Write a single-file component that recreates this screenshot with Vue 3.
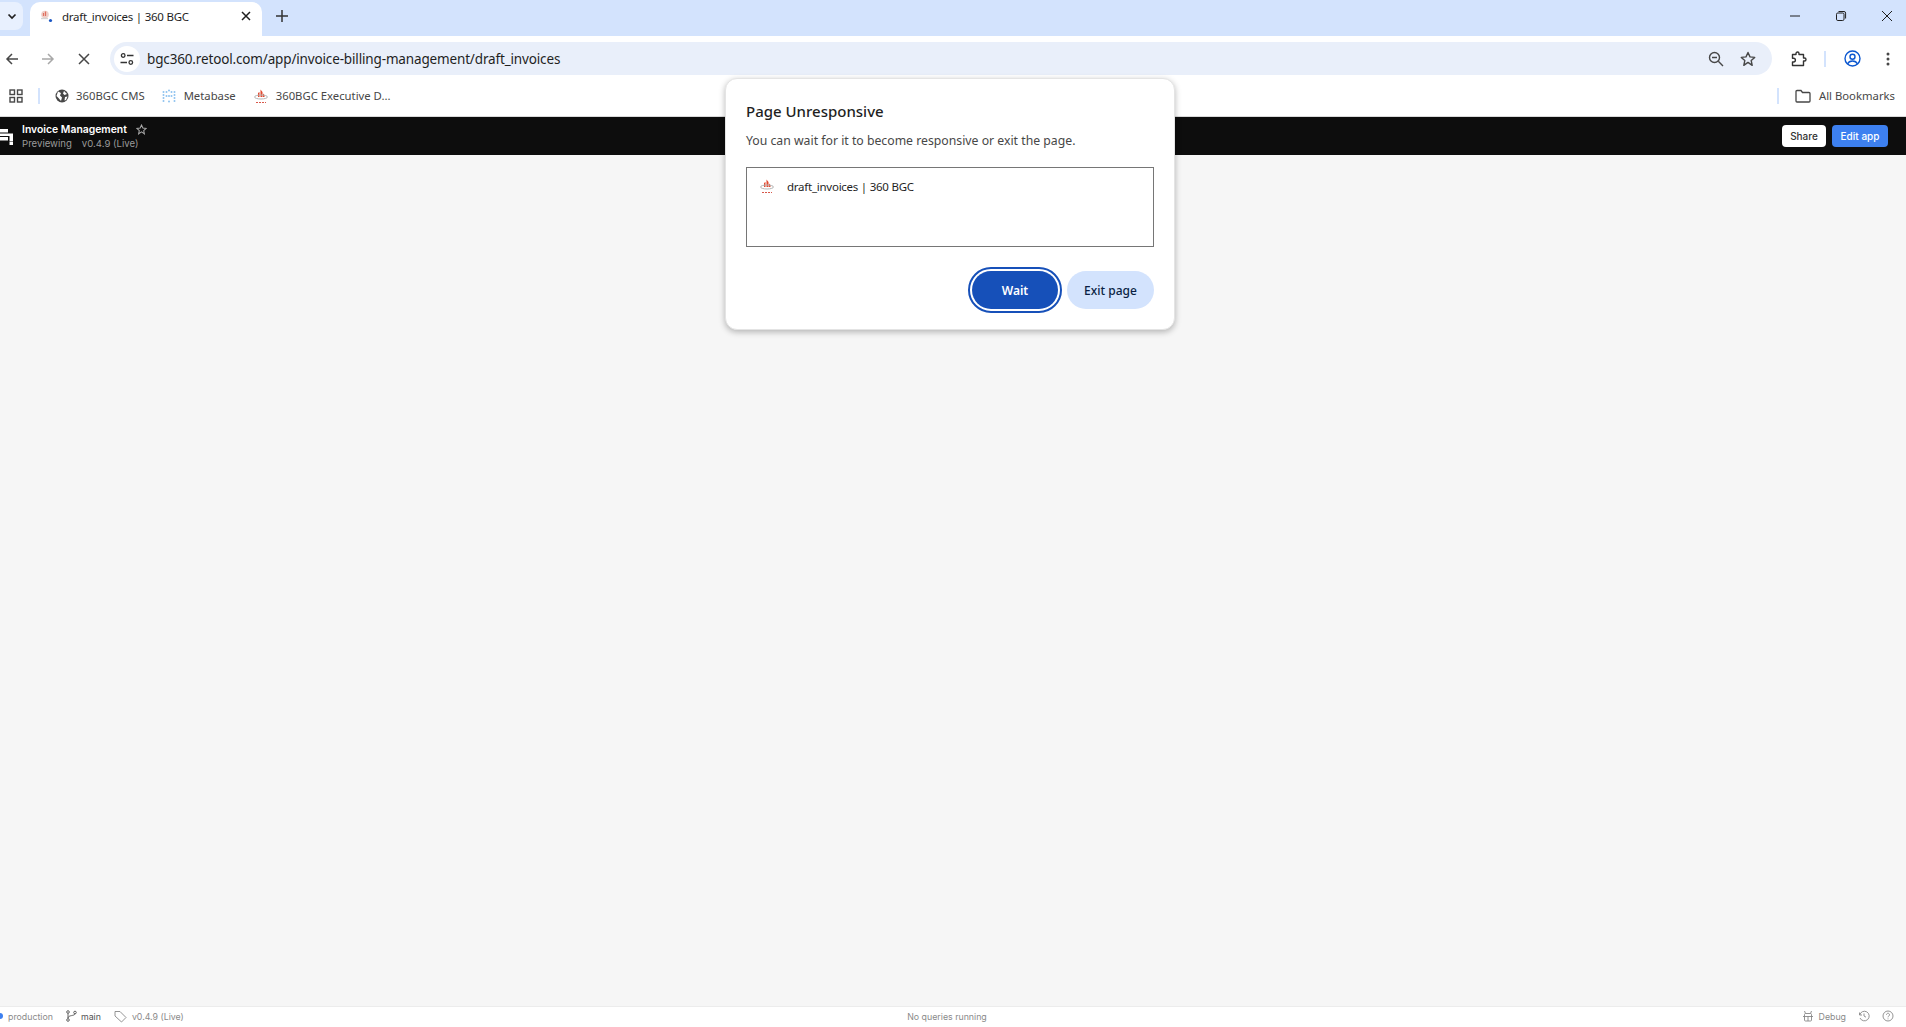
<script setup>
const bookmarks = [
  { label: '360BGC CMS', icon: 'globe' },
  { label: 'Metabase', icon: 'meta' },
  { label: '360BGC Executive D...', icon: 'logo' },
]
const metaDots = [
  [1.5, 3], [1.5, 6], [1.5, 9], [1.5, 12], [4.5, 3], [4.5, 7], [7, 1.5], [7, 7], [7, 12.5],
  [9.5, 3], [9.5, 7], [12.5, 3], [12.5, 6], [12.5, 9], [12.5, 12],
]
</script>

<template>
  <div class="page">
    <!-- tab strip -->
    <div class="tabstrip">
      <div class="tab-search">
        <svg width="12" height="12" viewBox="0 0 12 12"><path d="M2.500 4.500 6 8l3.500-3.500" fill="none" stroke="#1f1f1f" stroke-width="1.700" /></svg>
      </div>
      <div class="tab">
        <svg class="tab-fav" width="16" height="16" viewBox="0 0 16 16">
          <circle cx="6" cy="6.500" r="3.800" fill="#efcfc8" />
          <path d="M4.500 8V5M6.500 8V3.500" stroke="#e0705f" stroke-width="1.200" />
          <path d="M2 10.500h7" stroke="#d5d5d5" stroke-width="1.400" />
          <circle cx="11.500" cy="12.500" r="1.600" fill="#1a56c4" />
        </svg>
        <span class="tab-title">draft_invoices | 360 BGC</span>
        <svg class="tab-close" width="12" height="12" viewBox="0 0 12 12"><path d="M2 2l8 8M10 2l-8 8" stroke="#1f1f1f" stroke-width="1.500" /></svg>
      </div>
      <svg class="tab-plus" width="14" height="14" viewBox="0 0 14 14"><path d="M7 1v12M1 7h12" stroke="#333" stroke-width="1.500" /></svg>
      <div class="win-controls">
        <svg width="12" height="12" viewBox="0 0 12 12"><path d="M1 6h10" stroke="#1f1f1f" stroke-width="1" /></svg>
        <svg width="12" height="12" viewBox="0 0 12 12" fill="none" stroke="#1f1f1f"><rect x="1.500" y="3" width="7.500" height="7.500" rx="1.300" /><path d="M3.500 1.500h5.500a1.600 1.600 0 0 1 1.600 1.600V8.500" /></svg>
        <svg width="12" height="12" viewBox="0 0 12 12"><path d="M1 1l10 10M11 1 1 11" stroke="#1f1f1f" /></svg>
      </div>
    </div>

    <!-- toolbar -->
    <div class="toolbar">
      <div class="nav">
        <svg width="14" height="14" viewBox="0 0 14 14" fill="none" stroke="#474747" stroke-width="1.500"><path d="M13 7H2M7 2 2 7l5 5" /></svg>
        <svg width="14" height="14" viewBox="0 0 14 14" fill="none" stroke="#a8a8a8" stroke-width="1.500"><path d="M1 7h11M7 2l5 5-5 5" /></svg>
        <svg class="stop" width="12" height="12" viewBox="0 0 12 12"><path d="M1 1l10 10M11 1 1 11" stroke="#474747" stroke-width="1.500" /></svg>
      </div>
      <div class="omnibox">
        <div class="site-chip">
          <svg width="14" height="14" viewBox="0 0 14 14" fill="none" stroke="#333" stroke-width="1.300">
            <circle cx="3.200" cy="3.500" r="1.800" /><path d="M7 3.500h6.500M.5 10.500H7" /><circle cx="10.800" cy="10.500" r="1.800" />
          </svg>
        </div>
        <span class="url">bgc360.retool.com/app/invoice-billing-management/draft_invoices</span>
        <svg class="zoom-out" width="16" height="16" viewBox="0 0 16 16" fill="none" stroke="#474747" stroke-width="1.400">
          <circle cx="6.500" cy="6.500" r="5" /><path d="M10.300 10.300 15 15M4 6.500h5" />
        </svg>
        <svg class="star" width="16" height="16" viewBox="0 0 16 16" fill="none" stroke="#474747" stroke-width="1.400"><path d="m8 1.500 2 4.400 4.700.5-3.500 3.200 1 4.700L8 11.400l-4.200 2.900 1-4.700L1.300 6.400 6 5.900z" stroke-linejoin="round" /></svg>
      </div>
      <div class="tool-icons">
        <svg width="16" height="16" viewBox="0 0 16 16" fill="none" stroke="#333" stroke-width="1.400"><path d="M1.500 3.500H5V2.500a1.500 1.500 0 0 1 3 0v1h4.500V7h1a1.500 1.500 0 0 1 0 3h-1v4.500H1.500V11h1a1.700 1.700 0 0 0 0-3.800h-1z" stroke-linejoin="round" /></svg>
        <span class="tool-sep"></span>
        <svg width="17" height="17" viewBox="0 0 17 17" fill="none" stroke="#0b57d0" stroke-width="1.400"><circle cx="8.500" cy="8.500" r="7.500" /><circle cx="8.500" cy="6.800" r="2.500" /><path d="M3.500 14c1-2.200 3-3 5-3s4 .8 5 3" /></svg>
        <svg class="kebab" width="4" height="14" viewBox="0 0 4 14" fill="#474747"><circle cx="2" cy="2" r="1.500" /><circle cx="2" cy="7" r="1.500" /><circle cx="2" cy="12" r="1.500" /></svg>
      </div>
    </div>

    <!-- bookmarks -->
    <div class="bookmarks">
      <svg class="apps" width="14" height="14" viewBox="0 0 14 14" fill="none" stroke="#474747" stroke-width="1.400">
        <rect x="1" y="1" width="4.500" height="4.500" /><rect x="8.500" y="1" width="4.500" height="4.500" /><rect x="1" y="8.500" width="4.500" height="4.500" /><rect x="8.500" y="8.500" width="4.500" height="4.500" />
      </svg>
      <span class="bm-sep"></span>
      <div v-for="b in bookmarks" :key="b.label" class="bm">
        <svg v-if="b.icon === 'globe'" width="14" height="14" viewBox="0 0 14 14"><circle cx="7" cy="7" r="6.500" fill="#474747" /><path d="M3 2.500 6 4 5 6.500 7 8.500 6 12 3.500 9 1.500 7zM9 2l3 3-2.500 1L8 4.500zM10 8l2.500-.5L11 11l-1.500.5z" fill="#fff" /></svg>
        <svg v-else-if="b.icon === 'meta'" class="meta-icon" width="14" height="14" viewBox="0 0 14 14" fill="#8fc3ef">
          <circle v-for="(d, i) in metaDots" :key="i" :cx="d[0]" :cy="d[1]" r="1" />
        </svg>
        <svg v-else width="16" height="16" viewBox="0 0 16 16">
          <path d="M5 9V5l1.500-1V9zM7.500 9V1.500L9.500 4V9zM10 9V5.500L11.500 7V9z" fill="#e2492f" />
          <ellipse cx="8" cy="9" rx="6.500" ry="2" fill="none" stroke="#b5b5b5" stroke-width="1" />
          <path d="M3 14.500h10" stroke="#d8584a" stroke-width="1.200" stroke-dasharray="2 1" />
        </svg>
        <span>{{ b.label }}</span>
      </div>
      <span class="bm-sep right"></span>
      <div class="bm all">
        <svg width="16" height="14" viewBox="0 0 16 14" fill="none" stroke="#474747" stroke-width="1.300"><path d="M1 2.500A1 1 0 0 1 2 1.500h4l1.500 2H14a1 1 0 0 1 1 1V12a1 1 0 0 1-1 1H2a1 1 0 0 1-1-1z" /></svg>
        <span>All Bookmarks</span>
      </div>
    </div>

    <!-- retool header -->
    <header class="appbar">
      <svg class="retool-logo" width="13" height="16" viewBox="0 0 13 16" fill="#fff">
        <path d="M0 0h8v3.500H0zM0 4.500h13v3.500H9.500V7H0zM0 8h8v3.500H0zM9.500 8H13v4H9.500zM9.500 12.500H13V16H9.500z" />
      </svg>
      <div class="app-meta">
        <div class="app-name">Invoice Management
          <svg width="11" height="11" viewBox="0 0 16 16" fill="none" stroke="#a8a8a8" stroke-width="1.500"><path d="m8 1.500 2 4.400 4.700.5-3.500 3.200 1 4.700L8 11.400l-4.200 2.900 1-4.700L1.300 6.400 6 5.900z" /></svg>
        </div>
        <div class="app-sub"><span>Previewing</span><span>v0.4.9 (Live)</span></div>
      </div>
      <button class="btn-share">Share</button>
      <button class="btn-edit">Edit app</button>
    </header>

    <main class="canvas"></main>

    <footer class="statusbar">
      <div class="status-left">
        <span class="env"><i class="env-dot"></i>production</span>
        <span class="branch">
          <svg width="11" height="12" viewBox="0 0 11 12" fill="none" stroke="#555" stroke-width="0.900"><circle cx="2" cy="2" r="1.300" /><circle cx="2" cy="10" r="1.300" /><circle cx="9" cy="2.500" r="1.300" /><path d="M2 3.300v5.400M9 3.800C9 6 2 5 2 8" /></svg>
          main
        </span>
        <span class="version">
          <svg width="13" height="13" viewBox="0 0 13 13" fill="none" stroke="#888" stroke-width="0.900"><path d="M1 1.500h5l6 6-4.500 4.500-6.500-6z" /></svg>
          v0.4.9 (Live)
        </span>
      </div>
      <span class="status-mid">No queries running</span>
      <div class="status-right">
        <span class="debug">
          <svg width="12" height="12" viewBox="0 0 12 12" fill="none" stroke="#888" stroke-width="0.900"><rect x="2.500" y="3.500" width="7" height="7.500" rx="1" /><path d="M1 6.500h10M6 6.500V11M3.500 3.500 2.500 1M8.500 3.500 9.500 1" /></svg>
          Debug
        </span>
        <svg width="12" height="12" viewBox="0 0 12 12" fill="none" stroke="#888" stroke-width="0.900"><path d="M1.500 2.500v2.500H4M1.700 5A4.800 4.800 0 1 1 2 8M6 3.500V6l2 1.200" /></svg>
        <svg width="12" height="12" viewBox="0 0 12 12" fill="none" stroke="#888" stroke-width="0.900"><circle cx="6" cy="6" r="5" /><path d="M4.500 4.700a1.500 1.500 0 1 1 2.300 1.300c-.6.400-.8.700-.8 1.300M6 8.500v.8" /></svg>
      </div>
    </footer>

    <!-- chrome dialog over the page -->
    <div class="dialog">
      <h2>Page Unresponsive</h2>
      <p>You can wait for it to become responsive or exit the page.</p>
      <div class="tab-list">
        <svg width="16" height="16" viewBox="0 0 16 16">
          <path d="M5 9V5l1.500-1V9zM7.500 9V1.500L9.500 4V9zM10 9V5.500L11.500 7V9z" fill="#e2492f" />
          <ellipse cx="8" cy="9" rx="6.500" ry="2" fill="none" stroke="#b5b5b5" stroke-width="1" />
          <path d="M3 14.500h10" stroke="#d8584a" stroke-width="1.200" stroke-dasharray="2 1" />
        </svg>
        <span>draft_invoices | 360 BGC</span>
      </div>
      <div class="dialog-actions">
        <button class="btn-wait">Wait</button>
        <button class="btn-exit">Exit page</button>
      </div>
    </div>
  </div>
</template>

<style scoped>
.page {
  position: relative;
  height: 100vh;
  display: flex;
  flex-direction: column;
  overflow: hidden;
  font-family: "Noto Sans", "Open Sans", sans-serif;
  color: #1f1f1f;
  background: #f6f6f6;
}

.tabstrip {
  height: 36px;
  flex: none;
  background: #d3e3fd;
  display: flex;
  align-items: flex-start;
}
.tab-search {
  width: 23px;
  height: 28px;
  margin-top: 2px;
  background: #e8f0fe;
  border-radius: 0 8px 8px 0;
  display: flex;
  align-items: center;
  justify-content: center;
}
.tab {
  width: 232px;
  height: 34px;
  margin: 2px 0 0 7px;
  padding: 0 10px 6px 9px;
  box-sizing: border-box;
  background: #fff;
  border-radius: 10px 10px 0 0;
  display: flex;
  align-items: center;
  gap: 7px;
  font-size: 11.500px;
}
.tab-fav {
  flex: none;
}
.tab-title {
  flex: 1;
  letter-spacing: -0.25px;
  white-space: nowrap;
}
.tab-plus {
  margin: 9px 0 0 13px;
}
.win-controls {
  margin-left: auto;
  margin-top: 10px;
  padding-right: 13px;
  display: flex;
  gap: 34px;
}

.toolbar {
  height: 42px;
  flex: none;
  box-sizing: border-box;
  padding-top: 3px;
  background: #fff;
  display: flex;
  align-items: center;
}
.nav {
  width: 110px;
  flex: none;
  padding-left: 5px;
  box-sizing: border-box;
  display: flex;
  align-items: center;
  gap: 22px;
}
.stop {
  margin-left: 1px;
}
.omnibox {
  width: 1662px;
  height: 33px;
  flex: none;
  box-sizing: border-box;
  padding: 0 16px 0 4px;
  background: #e9effa;
  border-radius: 17px;
  display: flex;
  align-items: center;
}
.site-chip {
  width: 26px;
  height: 26px;
  border-radius: 50%;
  background: #fff;
  display: flex;
  align-items: center;
  justify-content: center;
}
.url {
  margin-left: 7px;
  font-size: 13.500px;
  letter-spacing: -0.15px;
  color: #1f1f1f;
  white-space: nowrap;
}
.zoom-out {
  margin-left: auto;
  transform: translateX(1px);
}
.star {
  margin-left: 17px;
}
.tool-icons {
  flex: 1;
  display: flex;
  align-items: center;
  padding-left: 19px;
}
.tool-sep {
  width: 2px;
  height: 16px;
  margin: 0 18px 0 17px;
  background: #d3e3fd;
}
.kebab {
  margin-left: 25px;
}

.bookmarks {
  height: 39px;
  flex: none;
  box-sizing: border-box;
  padding: 0 0 3px 9px;
  background: #fff;
  border-bottom: 1px solid #d9d9d9;
  display: flex;
  align-items: center;
  font-size: 11.300px;
  color: #474747;
}
.bm-sep {
  width: 2px;
  height: 16px;
  margin: 0 15px 0 15px;
  background: #d3e3fd;
}
.bm-sep.right {
  margin: 0 16px 0 auto;
}
.bm {
  display: flex;
  align-items: center;
  gap: 7px;
  margin-right: 17px;
  white-space: nowrap;
}
.meta-icon {
  margin-right: 1px;
}
.bm.all {
  margin-right: 11px;
  gap: 8px;
}

.appbar {
  height: 38px;
  flex: none;
  background: #0d0d0d;
  display: flex;
  align-items: center;
  font-family: Inter, "Liberation Sans", sans-serif;
  padding-right: 18px;
}
.retool-logo {
  margin: 2px 9px 0 0;
  flex: none;
}
.app-meta {
  flex: 1;
  padding-top: 1px;
}
.app-name {
  display: flex;
  align-items: center;
  gap: 9px;
  color: #fff;
  font-size: 10.400px;
  font-weight: 600;
  line-height: 14px;
}
.app-sub {
  display: flex;
  gap: 10px;
  color: #9a9a9a;
  font-size: 9.600px;
  line-height: 14px;
}
.btn-share,
.btn-edit {
  height: 22px;
  border: 0;
  border-radius: 4px;
  font-family: inherit;
  font-size: 10px;
  font-weight: 500;
  padding: 0;
}
.btn-share {
  width: 44px;
  background: #fff;
  color: #333;
  margin-right: 6px;
}
.btn-edit {
  width: 56px;
  background: #3d80f0;
  color: #fff;
}

.canvas {
  flex: 1;
  background: #f6f6f6;
}

.statusbar {
  height: 21px;
  flex: none;
  box-sizing: border-box;
  padding-bottom: 2px;
  border-top: 1px solid #ececec;
  background: #fff;
  font-family: Inter, "Liberation Sans", sans-serif;
  font-size: 8.800px;
  color: #8a8a8a;
  display: flex;
  align-items: center;
}
.status-left,
.status-right {
  flex: 1;
  display: flex;
  align-items: center;
}
.status-right {
  justify-content: flex-end;
  gap: 12px;
  padding-right: 12px;
}
.status-mid {
  flex: none;
}
.env {
  display: flex;
  align-items: center;
  gap: 5px;
  margin-right: 13px;
}
.env-dot {
  width: 6px;
  height: 6px;
  margin-left: -3px;
  border-radius: 50%;
  background: #3d80f0;
}
.branch {
  display: flex;
  align-items: center;
  gap: 4px;
  color: #555;
  margin-right: 13px;
}
.version {
  display: flex;
  align-items: center;
  gap: 5px;
}
.debug {
  display: flex;
  align-items: center;
  gap: 5px;
}

.dialog {
  position: absolute;
  left: 725px;
  top: 78px;
  width: 450px;
  height: 252px;
  box-sizing: border-box;
  padding: 22px 20px 0;
  background: #fff;
  border-radius: 12px;
  border: 1px solid #e4e4e4;
  box-shadow: 0 2px 6px rgba(0, 0, 0, 0.28);
}
.dialog h2 {
  margin: 0;
  font-size: 15px;
  line-height: 20px;
  font-weight: 500;
  color: #1f1f1f;
}
.dialog p {
  margin: 11px 0 0;
  font-size: 12.250px;
  line-height: 18px;
  color: #474747;
}
.tab-list {
  height: 80px;
  margin-top: 17px;
  box-sizing: border-box;
  border: 1px solid #767676;
  padding: 10px 12px;
  display: flex;
  align-items: flex-start;
  gap: 12px;
  font-size: 11.500px;
  letter-spacing: -0.25px;
  line-height: 18px;
}
.dialog-actions {
  margin-top: 24px;
  display: flex;
  justify-content: flex-end;
  align-items: center;
  gap: 9px;
}
.btn-wait,
.btn-exit {
  height: 38px;
  border: 0;
  border-radius: 19px;
  font-family: inherit;
  font-size: 12px;
  font-weight: 500;
  padding: 0;
}
.btn-wait {
  width: 86px;
  background: #1650b9;
  color: #fff;
  font-weight: 600;
  outline: 2px solid #1650b9;
  outline-offset: 2px;
}
.btn-exit {
  width: 87px;
  background: #d3e3fd;
  color: #0a1f44;
}
</style>
